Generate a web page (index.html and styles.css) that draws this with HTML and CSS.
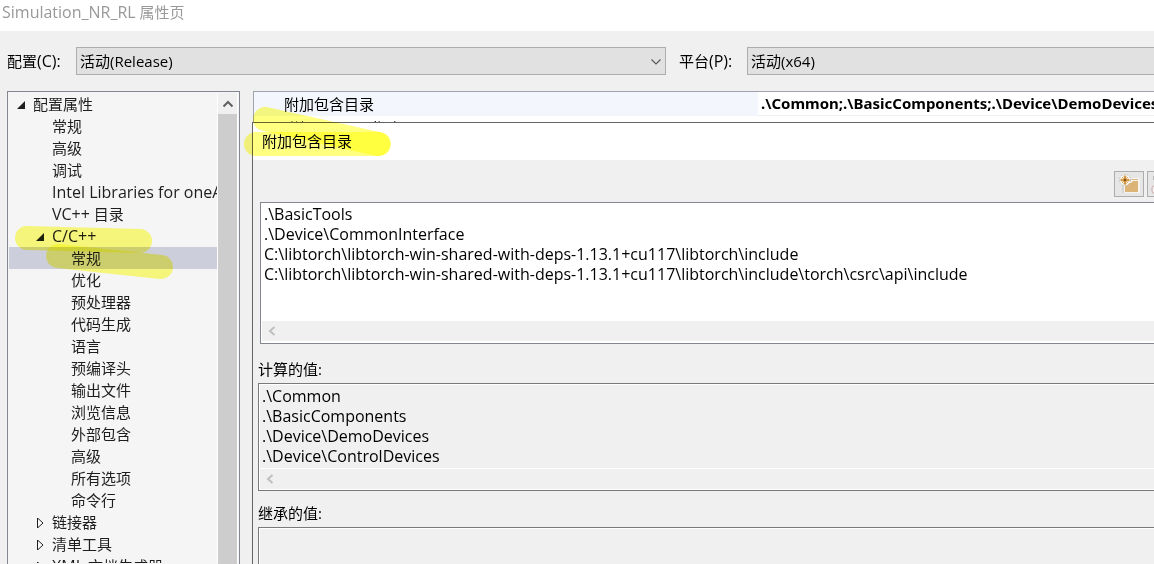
FILE: index.html
```html
<!DOCTYPE html>
<html lang="zh-CN">
<head>
<meta charset="utf-8">
<title>Simulation_NR_RL 属性页</title>
<link rel="stylesheet" href="styles.css">
</head>
<body>
<div class="window">
  <header class="titlebar"><span class="en">Simulation_NR_RL</span> 属性页</header>
  <div class="config">
    <label class="config-label" for="cfg">配置<span class="en">(C):</span></label>
    <div class="combo combo-config">
      <select id="cfg"><option>活动(Release)</option></select>
      <svg class="combo-arrow" width="12" height="8" viewBox="0 0 12 8"><path d="M1.5 1.5 6 6l4.500-4.500" fill="none" stroke="#555" stroke-width="1.1"/></svg>
    </div>
    <label class="config-label platform" for="plat">平台<span class="en">(P):</span></label>
    <div class="combo combo-platform">
      <select id="plat"><option>活动(x64)</option></select>
    </div>
  </div>
  <main class="content">
    <nav class="tree">
      <ul class="tree-list">
        <li class="node l0"><svg class="tw" viewBox="0 0 10 10"><path d="M9 1v8H1z" fill="#1e1e1e"/></svg>配置属性</li>
        <li class="node l1">常规</li>
        <li class="node l1">高级</li>
        <li class="node l1">调试</li>
        <li class="node l1"><span class="en">Intel Libraries for oneAPI</span></li>
        <li class="node l1"><span class="en">VC++</span> 目录</li>
        <li class="node l1"><svg class="tw" viewBox="0 0 10 10"><path d="M9 1v8H1z" fill="#1e1e1e"/></svg><span class="en">C/C++</span></li>
        <li class="node l2 selected">常规</li>
        <li class="node l2">优化</li>
        <li class="node l2">预处理器</li>
        <li class="node l2">代码生成</li>
        <li class="node l2">语言</li>
        <li class="node l2">预编译头</li>
        <li class="node l2">输出文件</li>
        <li class="node l2">浏览信息</li>
        <li class="node l2">外部包含</li>
        <li class="node l2">高级</li>
        <li class="node l2">所有选项</li>
        <li class="node l2">命令行</li>
        <li class="node l1"><svg class="tw" viewBox="0 0 10 10"><path d="M2.500 0v10L8 5z" fill="#fff" stroke="#1e1e1e"/></svg>链接器</li>
        <li class="node l1"><svg class="tw" viewBox="0 0 10 10"><path d="M2.500 0v10L8 5z" fill="#fff" stroke="#1e1e1e"/></svg>清单工具</li>
        <li class="node l1"><svg class="tw" viewBox="0 0 10 10"><path d="M2.500 0v10L8 5z" fill="#fff" stroke="#1e1e1e"/></svg><span class="en">XML</span> 文档生成器</li>
      </ul>
      <div class="vscroll">
        <button class="vscroll-up" aria-label="向上滚动"><svg width="12" height="8" viewBox="0 0 12 8"><path d="M1.500 6.500 6 2l4.500 4.500" fill="none" stroke="#606060" stroke-width="2"/></svg></button>
        <div class="vscroll-thumb"></div>
      </div>
    </nav>
    <section class="pane">
      <div class="props">
        <div class="prop"><span class="prop-name">附加包含目录</span><span class="prop-value">.\Common;.\BasicComponents;.\Device\DemoDevices;.\Device\ControlDevices</span></div>
        <div class="prop second"><span class="prop-name">附加 <span class="en">#using</span> 指令</span><span class="prop-value"></span></div>
      </div>
      <div class="dialog">
        <h1 class="dialog-title">附加包含目录</h1>
        <div class="toolbar">
          <button class="tool" aria-label="新行">
            <svg width="24" height="22" viewBox="0 0 24 22"><path d="M5 6h8l2-1h8v15H5z" fill="#f7f3ee"/><path d="M6 9v11" stroke="#b9b6b2"/><path d="M8 10h6l2-2h5v11H8z" fill="#dcb478"/><path d="M14 6.500h7" stroke="#d8b98c"/><circle cx="8" cy="7" r="5.500" fill="#fff" stroke="#c5c2be" stroke-dasharray="2 1"/><g fill="#d39a48"><circle cx="8" cy="3.800" r="1.500"/><circle cx="8" cy="10.200" r="1.500"/><circle cx="4.800" cy="7" r="1.500"/><circle cx="11.200" cy="7" r="1.500"/><circle cx="8" cy="7" r="2.300"/></g><path d="M5 4l6 6M11 4l-6 6" stroke="#dcae6c"/><circle cx="8" cy="7" r="1.200" fill="#8b4c14"/></svg>
          </button>
          <button class="tool cut" aria-label="删除">
            <svg width="24" height="22" viewBox="0 0 24 22"><path d="M5 3h5v4H5z" fill="#bbb"/><rect x="4" y="13" width="9" height="7" rx="2" fill="#f5eeee" stroke="#c9aaaa"/></svg>
          </button>
        </div>
        <div class="box edit">
          <textarea class="text" rows="5" wrap="off" spellcheck="false" aria-label="附加包含目录">.\BasicTools
.\Device\CommonInterface
C:\libtorch\libtorch-win-shared-with-deps-1.13.1+cu117\libtorch\include
C:\libtorch\libtorch-win-shared-with-deps-1.13.1+cu117\libtorch\include\torch\csrc\api\include</textarea>
          <div class="hscroll"><svg width="8" height="10" viewBox="0 0 8 10"><path d="M6.500 1 2 5l4.500 4" fill="none" stroke="#bfbfbf" stroke-width="2"/></svg></div>
        </div>
        <label class="caption" for="computed">计算的值:</label>
        <div class="box computed">
          <textarea class="text" id="computed" rows="4" wrap="off" readonly>.\Common
.\BasicComponents
.\Device\DemoDevices
.\Device\ControlDevices</textarea>
          <div class="hscroll"><svg width="8" height="10" viewBox="0 0 8 10"><path d="M6.500 1 2 5l4.500 4" fill="none" stroke="#bfbfbf" stroke-width="2"/></svg></div>
        </div>
        <label class="caption" for="inherited">继承的值:</label>
        <div class="box inherited">
          <textarea class="text" id="inherited" rows="4" readonly></textarea>
        </div>
      </div>
    </section>
  </main>
  <svg class="marker" width="420" height="300" viewBox="0 0 420 300" aria-hidden="true">
    <path d="M27 238L140 241"/>
    <path d="M58 256L161 267"/>
    <path d="M265 119L378 144"/>
    <path d="M256 144L379 144"/>
  </svg>
</div>
</body>
</html>
```
FILE: styles.css
```css
* { box-sizing: border-box; }

body {
  margin: 0;
  background: #f0f0f0;
  color: #000;
  font: 15px/20px "Open Sans", "Noto Sans CJK SC", sans-serif;
}

select, textarea, button { font: inherit; color: inherit; }

.en { font-size: 16px; line-height: 1; }

.window {
  position: relative;
  display: flex;
  flex-direction: column;
  height: 100vh;
  overflow: hidden;
}

.titlebar {
  height: 31px;
  padding: 2px;
  background: #fff;
  color: #999;
}

.config {
  display: flex;
  align-items: center;
  padding: 16px 0 16px 7px;
}
.config-label { flex: 0 0 69px; white-space: nowrap; }
.platform { flex-basis: 68px; margin-left: 13px; }

.combo { position: relative; min-width: 0; }
.combo-config { flex: 590 1 0; }
.combo-platform { flex: 407 1 0; }
.combo select {
  display: block;
  width: 100%;
  height: 28px;
  padding: 0 3px;
  border: 1px solid #adadad;
  border-radius: 0;
  background: #e1e1e1;
  appearance: none;
}
.combo-platform select { border-right: 0; }
.combo-arrow { position: absolute; right: 4px; top: 11px; }

.content {
  display: flex;
  flex: 1;
  min-height: 0;
  gap: 13px;
  padding-left: 7px;
}

.tree {
  display: flex;
  flex: 0 0 233px;
  padding: 1px;
  border: 1px solid #828790;
  border-bottom: 0;
  background: #f5f5f5;
  overflow: hidden;
}
.tree-list {
  flex: 1;
  min-width: 0;
  margin: 0;
  padding: 0;
  list-style: none;
  overflow: hidden;
}
.node {
  position: relative;
  height: 22px;
  line-height: 22px;
  white-space: nowrap;
  color: #1e1e1e;
}
.l0 { padding-left: 24px; }
.l1 { padding-left: 43px; }
.l2 { padding-left: 62px; }
.selected { background: #cccedb; }
.tw { width: 10px; height: 10px; margin: 0 7px 0 -17px; }

.vscroll {
  flex: 0 0 21px;
  border-left: 1px solid #fff;
  border-right: 1px solid #fff;
  background: #f0f0f0;
}
.vscroll-up {
  display: grid;
  place-items: center;
  width: 100%;
  height: 21px;
  padding: 0;
  border: 0;
  background: #f0f0f0;
}
.vscroll-thumb { height: 100%; background: #cdcdcd; }

.pane {
  display: flex;
  flex: 1;
  flex-direction: column;
  min-width: 0;
}

.props {
  flex: 0 0 31px;
  border: 1px solid #a0a4ac;
  border-width: 1px 0 0 1px;
  background: #fff;
  overflow: hidden;
}
.prop {
  display: grid;
  grid-template-columns: 504fr 396fr;
  height: 24px;
  line-height: 24px;
  white-space: nowrap;
}
.prop-name { padding-left: 30px; background: #f3f6fc; }
.prop-value {
  min-width: 0;
  padding-left: 3px;
  border-bottom: 1px solid #f0f0f0;
  font-family: "Noto Sans", "Noto Sans CJK SC", sans-serif;
  font-weight: 700;
  line-height: 22px;
  overflow: hidden;
}
.second .prop-name { background: #fff; }

.dialog {
  flex: 1;
  min-height: 0;
  margin-left: -1px;
  border: 1px solid #646464;
  border-width: 1px 0 0 1px;
  background: #f0f0f0;
  overflow: hidden;
}
.dialog-title {
  height: 37px;
  margin: 0;
  padding: 8px 9px;
  background: #fff;
  font-size: 15px;
  font-weight: 400;
  line-height: 20px;
}
.toolbar {
  display: flex;
  justify-content: flex-end;
  gap: 3px;
  height: 42px;
  padding-top: 11px;
}
.tool {
  display: grid;
  place-items: center;
  width: 30px;
  height: 26px;
  padding: 0;
  border: 1px solid #adadad;
  background: #e6e6e6;
}
.cut { width: 7px; border-right: 0; justify-content: start; overflow: hidden; }

.box {
  margin-left: 5px;
  padding: 2px 0 2px 1px;
  border: 1px solid #7a7a7a;
  border-right: 0;
  box-shadow: inset 1px 1px #fff, inset 0 -1px #fff;
}
.edit {
  margin: 0 0 3px 7px;
  padding-top: 1px;
  background: #fff;
  border-color: #828790;
}
.text {
  display: block;
  width: 100%;
  padding: 0 2px;
  border: 0;
  background: transparent;
  font-size: 16px;
  resize: none;
  outline: 0;
  overflow: hidden;
}
.edit .text { height: 117px; }
.computed .text { height: 82px; }
.hscroll {
  display: flex;
  align-items: center;
  height: 20px;
  padding-left: 6px;
  background: #f0f0f0;
}
.computed .hscroll { border-top: 1px solid #fff; }
.caption { display: block; padding: 12px 0 4px 5px; }

.marker {
  position: absolute;
  left: 0;
  top: 0;
  pointer-events: none;
  mix-blend-mode: multiply;
}
.marker path {
  fill: none;
  stroke: #ffff80;
  stroke-width: 24px;
  stroke-linecap: round;
  mix-blend-mode: multiply;
}
```
